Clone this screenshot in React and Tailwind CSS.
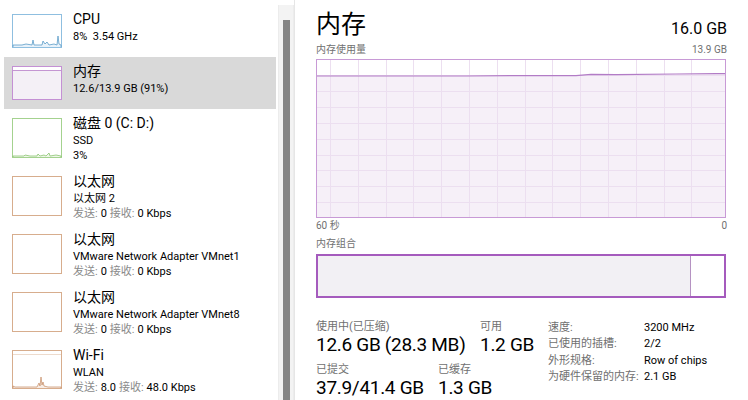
import React from "react";

const FONT = { fontFamily: 'Roboto, "Noto Sans CJK SC", sans-serif' };

function Thumb({ kind, h }) {
  const w = 50;
  if (kind === "cpu") {
    return (
      <svg width={w} height={h} className="block">
        <rect x="0.5" y="0.5" width={w - 1} height={h - 1} fill="#fff" stroke="#8fbfe0" />
        <polyline fill="#e8f2fa" stroke="#5a9cc8" strokeWidth="0.8"
          points={`1,${h - 1} 1,${h - 3} 10,${h - 3} 14,${h - 4} 20,${h - 3} 21,${h - 8} 22,${h - 3} 30,${h - 3} 31,${h - 7} 33,${h - 4} 35,${h - 6} 37,${h - 3} 42,${h - 4} 45,${h - 3} 46,${h - 12} 47,${h - 4} 49,${h - 3} 49,${h - 1}`} />
      </svg>
    );
  }
  if (kind === "mem") {
    return (
      <svg width={w} height={h} className="block">
        <rect x="0.5" y="0.5" width={w - 1} height={h - 1} fill="#f4f0f6" stroke="#c490d4" />
        <rect x="1" y="1" width={w - 2} height="3" fill="#fff" />
        <line x1="1" y1="4.5" x2={w - 1} y2="4.5" stroke="#b77fc9" strokeWidth="0.8" />
      </svg>
    );
  }
  if (kind === "disk") {
    return (
      <svg width={w} height={h} className="block">
        <rect x="0.5" y="0.5" width={w - 1} height={h - 1} fill="#fff" stroke="#a4d28f" />
        <polyline fill="#eef7e8" stroke="#7cbb5e" strokeWidth="0.7"
          points={`1,${h - 1} 1,${h - 2} 12,${h - 2} 13,${h - 3} 18,${h - 2} 25,${h - 2} 26,${h - 4} 28,${h - 2} 32,${h - 3} 34,${h - 2} 37,${h - 5} 38,${h - 2} 44,${h - 3} 49,${h - 2} 49,${h - 1}`} />
      </svg>
    );
  }
  if (kind === "wifi") {
    return (
      <svg width={w} height={h} className="block">
        <rect x="0.5" y="0.5" width={w - 1} height={h - 1} fill="#fff" stroke="#d7ad8d" />
        <line x1="1" y1="4.5" x2={w - 1} y2="4.5" stroke="#e0c2ab" strokeWidth="0.6" />
        <polyline fill="#f7ece4" stroke="#c48a62" strokeWidth="0.7"
          points={`1,${h - 1} 1,${h - 3} 3,${h - 2} 25,${h - 2} 27,${h - 6} 28,${h - 3} 29,${h - 12} 30,${h - 4} 31,${h - 7} 32,${h - 3} 36,${h - 2} 49,${h - 2} 49,${h - 1}`} />
      </svg>
    );
  }
  return (
    <svg width={w} height={h} className="block">
      <rect x="0.5" y="0.5" width={w - 1} height={h - 1} fill="#fff" stroke="#d7ad8d" />
    </svg>
  );
}

function NetLine({ send, recv }) {
  return (
    <div className="flex gap-[3px] whitespace-nowrap text-[11px] leading-[15px] text-black">
      <span className="text-[#8a8a8a]">发送:</span>
      <span>{send}</span>
      <span className="text-[#8a8a8a]">接收:</span>
      <span>{recv} Kbps</span>
    </div>
  );
}

function Row({ h, thumbTop, thumbH, kind, selected, title, lines }) {
  return (
    <div className={`flex shrink-0 ${selected ? "bg-[#d9d9d9]" : ""}`} style={{ height: h }}>
      <div className="ml-[8px]" style={{ marginTop: thumbTop }}>
        <Thumb kind={kind} h={thumbH} />
      </div>
      <div className="ml-[11px]" style={{ marginTop: thumbTop - 4 }}>
        <div className="text-[14px] leading-[19px] text-black">{title}</div>
        {lines}
      </div>
    </div>
  );
}

const sub = "whitespace-nowrap text-[11px] leading-[15px] text-black";

function MainGraph() {
  const W = 410, H = 159;
  const vx = [14, 42, 70, 97, 125, 153, 181, 209, 236, 264, 292, 320, 348, 375];
  const hy = [16, 32, 48, 64, 80, 96, 111, 127, 143];
  const line = "0,17 150,17 200,16.6 260,16.6 275,15.4 300,15.6 360,15 400,14.6 410,14.6";
  return (
    <svg width={W} height={H} className="block">
      <rect x="0" y="0" width={W} height={H} fill="#fff" />
      <polygon points={`${line} ${W},${H} 0,${H}`} fill="#f6f0f8" />
      {vx.map((x) => (
        <line key={x} x1={x + 0.5} y1="0" x2={x + 0.5} y2={H} stroke="#ecdff0" strokeWidth="1" />
      ))}
      {hy.map((y) => (
        <line key={y} x1="0" y1={y + 0.5} x2={W} y2={y + 0.5} stroke="#ecdff0" strokeWidth="1" />
      ))}
      <polyline points={line} fill="none" stroke="#b27cc6" strokeWidth="1.2" />
      <rect x="0.5" y="0.5" width={W - 1} height={H - 1} fill="none" stroke="#c89ad6" strokeWidth="1" />
    </svg>
  );
}

const label = "whitespace-nowrap text-[11px] leading-[14px] text-[#707070]";
const big = "whitespace-nowrap text-[19px] leading-[21px] tracking-[-0.3px] text-black";

export default function App() {
  return (
    <div className="flex h-[400px] w-[748px] overflow-hidden bg-white" style={FONT}>
      {/* left list */}
      <div className="flex w-[278px] shrink-0 flex-col pl-[4px] pr-[2px]">
        <Row h={57} thumbTop={14} thumbH={34} kind="cpu" title="CPU"
          lines={<div className={sub}>8%&nbsp; 3.54 GHz</div>} />
        <Row h={52} thumbTop={9} thumbH={34} kind="mem" selected title="内存"
          lines={<div className={sub}>12.6/13.9 GB (91%)</div>} />
        <Row h={58} thumbTop={9} thumbH={40} kind="disk" title="磁盘 0 (C: D:)"
          lines={<><div className={sub}>SSD</div><div className={sub}>3%</div></>} />
        <Row h={58} thumbTop={9} thumbH={40} kind="net" title="以太网"
          lines={<><div className={sub}>以太网 2</div><NetLine send="0" recv="0" /></>} />
        <Row h={58} thumbTop={9} thumbH={40} kind="net" title="以太网"
          lines={<><div className={sub}>VMware Network Adapter VMnet1</div><NetLine send="0" recv="0" /></>} />
        <Row h={58} thumbTop={9} thumbH={40} kind="net" title="以太网"
          lines={<><div className={sub}>VMware Network Adapter VMnet8</div><NetLine send="0" recv="0" /></>} />
        <Row h={58} thumbTop={9} thumbH={39} kind="wifi" title="Wi-Fi"
          lines={<><div className={sub}>WLAN</div><NetLine send="8.0" recv="48.0" /></>} />
      </div>

      {/* scrollbar */}
      <div className="mt-[5px] flex w-[16px] shrink-0 justify-center border-x border-[#ececec] bg-[#f3f3f3] pt-[15px]">
        <div className="h-[380px] w-[7px] bg-[#858585]" />
      </div>

      {/* right detail */}
      <div className="flex flex-1 flex-col border-l border-[#e6e6e6] pl-[21px] pr-[21px]">
        <div className="mt-[8px] flex shrink-0 items-end justify-between">
          <div className="text-[25px] leading-[33px] text-black">内存</div>
          <div className="mb-[2px] text-[16px] leading-[20px] text-black">16.0 GB</div>
        </div>
        <div className="mt-[2px] flex shrink-0 justify-between text-[10px] leading-[14px] text-[#707070]">
          <span>内存使用量</span>
          <span>13.9 GB</span>
        </div>
        <div className="mt-[2px] shrink-0">
          <MainGraph />
        </div>
        <div className="mt-[1px] flex shrink-0 justify-between text-[10px] leading-[14px] text-[#707070]">
          <span>60 秒</span>
          <span>0</span>
        </div>
        <div className="mt-[4px] shrink-0 text-[10px] leading-[14px] text-[#707070]">内存组合</div>
        <div className="mt-[3px] flex h-[44px] w-[410px] shrink-0 border-2 border-[#a55bbd]">
          <div className="h-full w-[373px] border-r border-[#b592c2] bg-[#f2f0f4]" />
          <div className="flex-1 bg-white" />
        </div>

        <div className="mt-[22px] flex shrink-0 items-start">
          <div className="flex w-[232px] shrink-0 flex-col">
            <div className="flex">
              <div className="w-[164px] shrink-0">
                <div className={label}>使用中(已压缩)</div>
                <div className={big}>12.6 GB (28.3 MB)</div>
              </div>
              <div>
                <div className={label}>可用</div>
                <div className={big}>1.2 GB</div>
              </div>
            </div>
            <div className="mt-[8px] flex">
              <div className="w-[122px] shrink-0">
                <div className={label}>已提交</div>
                <div className={big}>37.9/41.4 GB</div>
              </div>
              <div>
                <div className={label}>已缓存</div>
                <div className={big}>1.3 GB</div>
              </div>
            </div>
          </div>
          <div className="grid grid-cols-[96px_auto] content-start text-[11px] leading-[16.3px]">
            <span className="whitespace-nowrap text-[#707070]">速度:</span><span className="whitespace-nowrap text-black">3200 MHz</span>
            <span className="whitespace-nowrap text-[#707070]">已使用的插槽:</span><span className="whitespace-nowrap text-black">2/2</span>
            <span className="whitespace-nowrap text-[#707070]">外形规格:</span><span className="whitespace-nowrap text-black">Row of chips</span>
            <span className="whitespace-nowrap text-[#707070]">为硬件保留的内存:</span><span className="whitespace-nowrap text-black">2.1 GB</span>
          </div>
        </div>
      </div>
    </div>
  );
}
